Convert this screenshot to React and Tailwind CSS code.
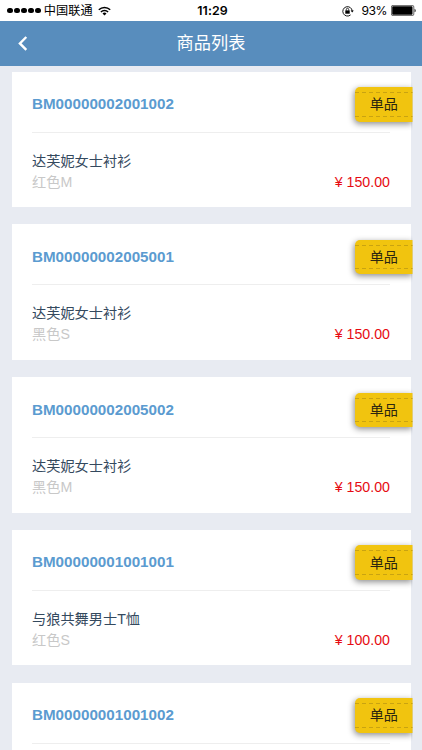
const products = [
  { code: 'BM00000002001002', name: '达芙妮女士衬衫', spec: '红色M', price: '150.00' },
  { code: 'BM00000002005001', name: '达芙妮女士衬衫', spec: '黑色S', price: '150.00' },
  { code: 'BM00000002005002', name: '达芙妮女士衬衫', spec: '黑色M', price: '150.00' },
  { code: 'BM00000001001001', name: '与狼共舞男士T恤', spec: '红色S', price: '100.00' },
  { code: 'BM00000001001002' },
];

function StatusBar() {
  return (
    <div className="grid h-[20.5px] shrink-0 grid-cols-[1fr_auto_1fr] items-center bg-white pl-[7px] pr-[6px] text-black">
      <div className="flex items-center">
        <div className="flex gap-[1.1px]">
          {[0, 1, 2, 3, 4].map((dot) => (
            <span key={dot} className="size-[5.9px] rounded-full bg-black" />
          ))}
        </div>
        <span className="ml-[3px] text-[12.2px] leading-5">中国联通</span>
        <svg className="ml-[5px] h-[10px] w-[13px]" viewBox="0 0 13 10" fill="none" stroke="black">
          <path d="M0.8 3.8a8.1 8.1 0 0 1 11.4 0" strokeWidth="1.5" />
          <path d="M2.9 6a5.1 5.1 0 0 1 7.2 0" strokeWidth="1.5" />
          <path d="M6.5 9.6 4.5 7.6a2.8 2.8 0 0 1 4 0z" fill="black" stroke="none" />
        </svg>
      </div>
      <span className="pl-[2px] pt-[1px] font-['Inter'] text-[12.4px] font-semibold leading-5 tracking-[0.1px]">11:29</span>
      <div className="flex items-center justify-end">
        {/* Rotation lock */}
        <svg className="mr-[7px] h-[12px] w-[12px]" viewBox="0 0 12 12" fill="none" stroke="black">
          <path d="M8.6 9.9A4.7 4.7 0 1 1 10.2 6" strokeWidth="0.9" />
          <path d="M8.6 5.6h3.2l-1.6 2z" fill="black" stroke="none" />
          <rect x="3.3" y="5.4" width="4.4" height="3.3" fill="black" stroke="none" />
          <path d="M4.3 5.6V4.5a1.2 1.2 0 0 1 2.4 0v1.1" strokeWidth="0.8" />
        </svg>
        <span className="pt-[1px] font-['Inter'] text-[12.2px] leading-5 tracking-[-0.5px]">93%</span>
        <svg className="ml-[4px] h-[11px] w-[25px]" viewBox="0 0 25 11">
          <rect x="0.4" y="0.4" width="22.4" height="10.2" rx="1.5" fill="none" stroke="black" strokeWidth="0.6" />
          <rect x="1.2" y="1.2" width="20.3" height="8.6" rx="0.7" fill="black" />
          <path d="M23.6 3.7c1.4 0.4 1.4 3.2 0 3.6z" fill="black" />
        </svg>
      </div>
    </div>
  );
}

function Badge() {
  return (
    <div className="absolute right-[-2px] top-[15.5px] flex h-[34.5px] w-[57.5px] flex-col justify-between rounded-l-[5px] bg-[#f1c40f] py-[5px] shadow-[-1px_2px_6px_rgba(0,0,0,0.45)] [clip-path:inset(-10px_0_-10px_-10px)]">
      <Stitch />
      <span className="text-center text-[14.1px] leading-[18px] text-[#2b2610]">单品</span>
      <Stitch />
    </div>
  );
}

function Stitch() {
  return (
    <span className="h-px w-full bg-[repeating-linear-gradient(90deg,#c9a311_0,#c9a311_4px,transparent_4px,transparent_7px)]" />
  );
}

function ProductCard({ product }) {
  return (
    <div className="relative h-[135.6px] shrink-0 bg-white px-[20.5px]">
      <div className="flex h-[61px] items-center border-b border-[#eeeeee] pt-[5px]">
        <h2 className="text-[15.2px] font-bold leading-5 text-[#5b9bd0]">{product.code}</h2>
      </div>
      <Badge />
      {product.name && (
        <div className="pt-[18px]">
          <p className="text-[14.2px] leading-[21px] text-[#34495e]">{product.name}</p>
          <div className="flex items-center justify-between text-[14.2px] leading-[21px]">
            <span className="text-[#c8c8c8]">{product.spec}</span>
            <span className="text-[#e60b12]">¥ {product.price}</span>
          </div>
        </div>
      )}
    </div>
  );
}

export default function App() {
  return (
    <div className="flex h-[750px] w-full flex-col overflow-hidden bg-[#e8ebf2] font-['Liberation_Sans','Noto_Sans_CJK_SC',sans-serif]">
      <StatusBar />
      <header className="grid h-[45px] shrink-0 grid-cols-[1fr_auto_1fr] items-center bg-[#588dbd] text-white">
        <svg className="ml-[18px] h-[15px] w-[10px]" viewBox="0 0 10 15" fill="none" stroke="currentColor" strokeWidth="2.4">
          <path d="M8.3 1 1.9 7.4 8.3 13.8" />
        </svg>
        <h1 className="text-[17.2px] leading-6">商品列表</h1>
      </header>
      <main className="flex flex-col gap-[17.2px] px-[11.5px] pt-[6px]">
        {products.map((product) => (
          <ProductCard key={product.code} product={product} />
        ))}
      </main>
    </div>
  );
}
